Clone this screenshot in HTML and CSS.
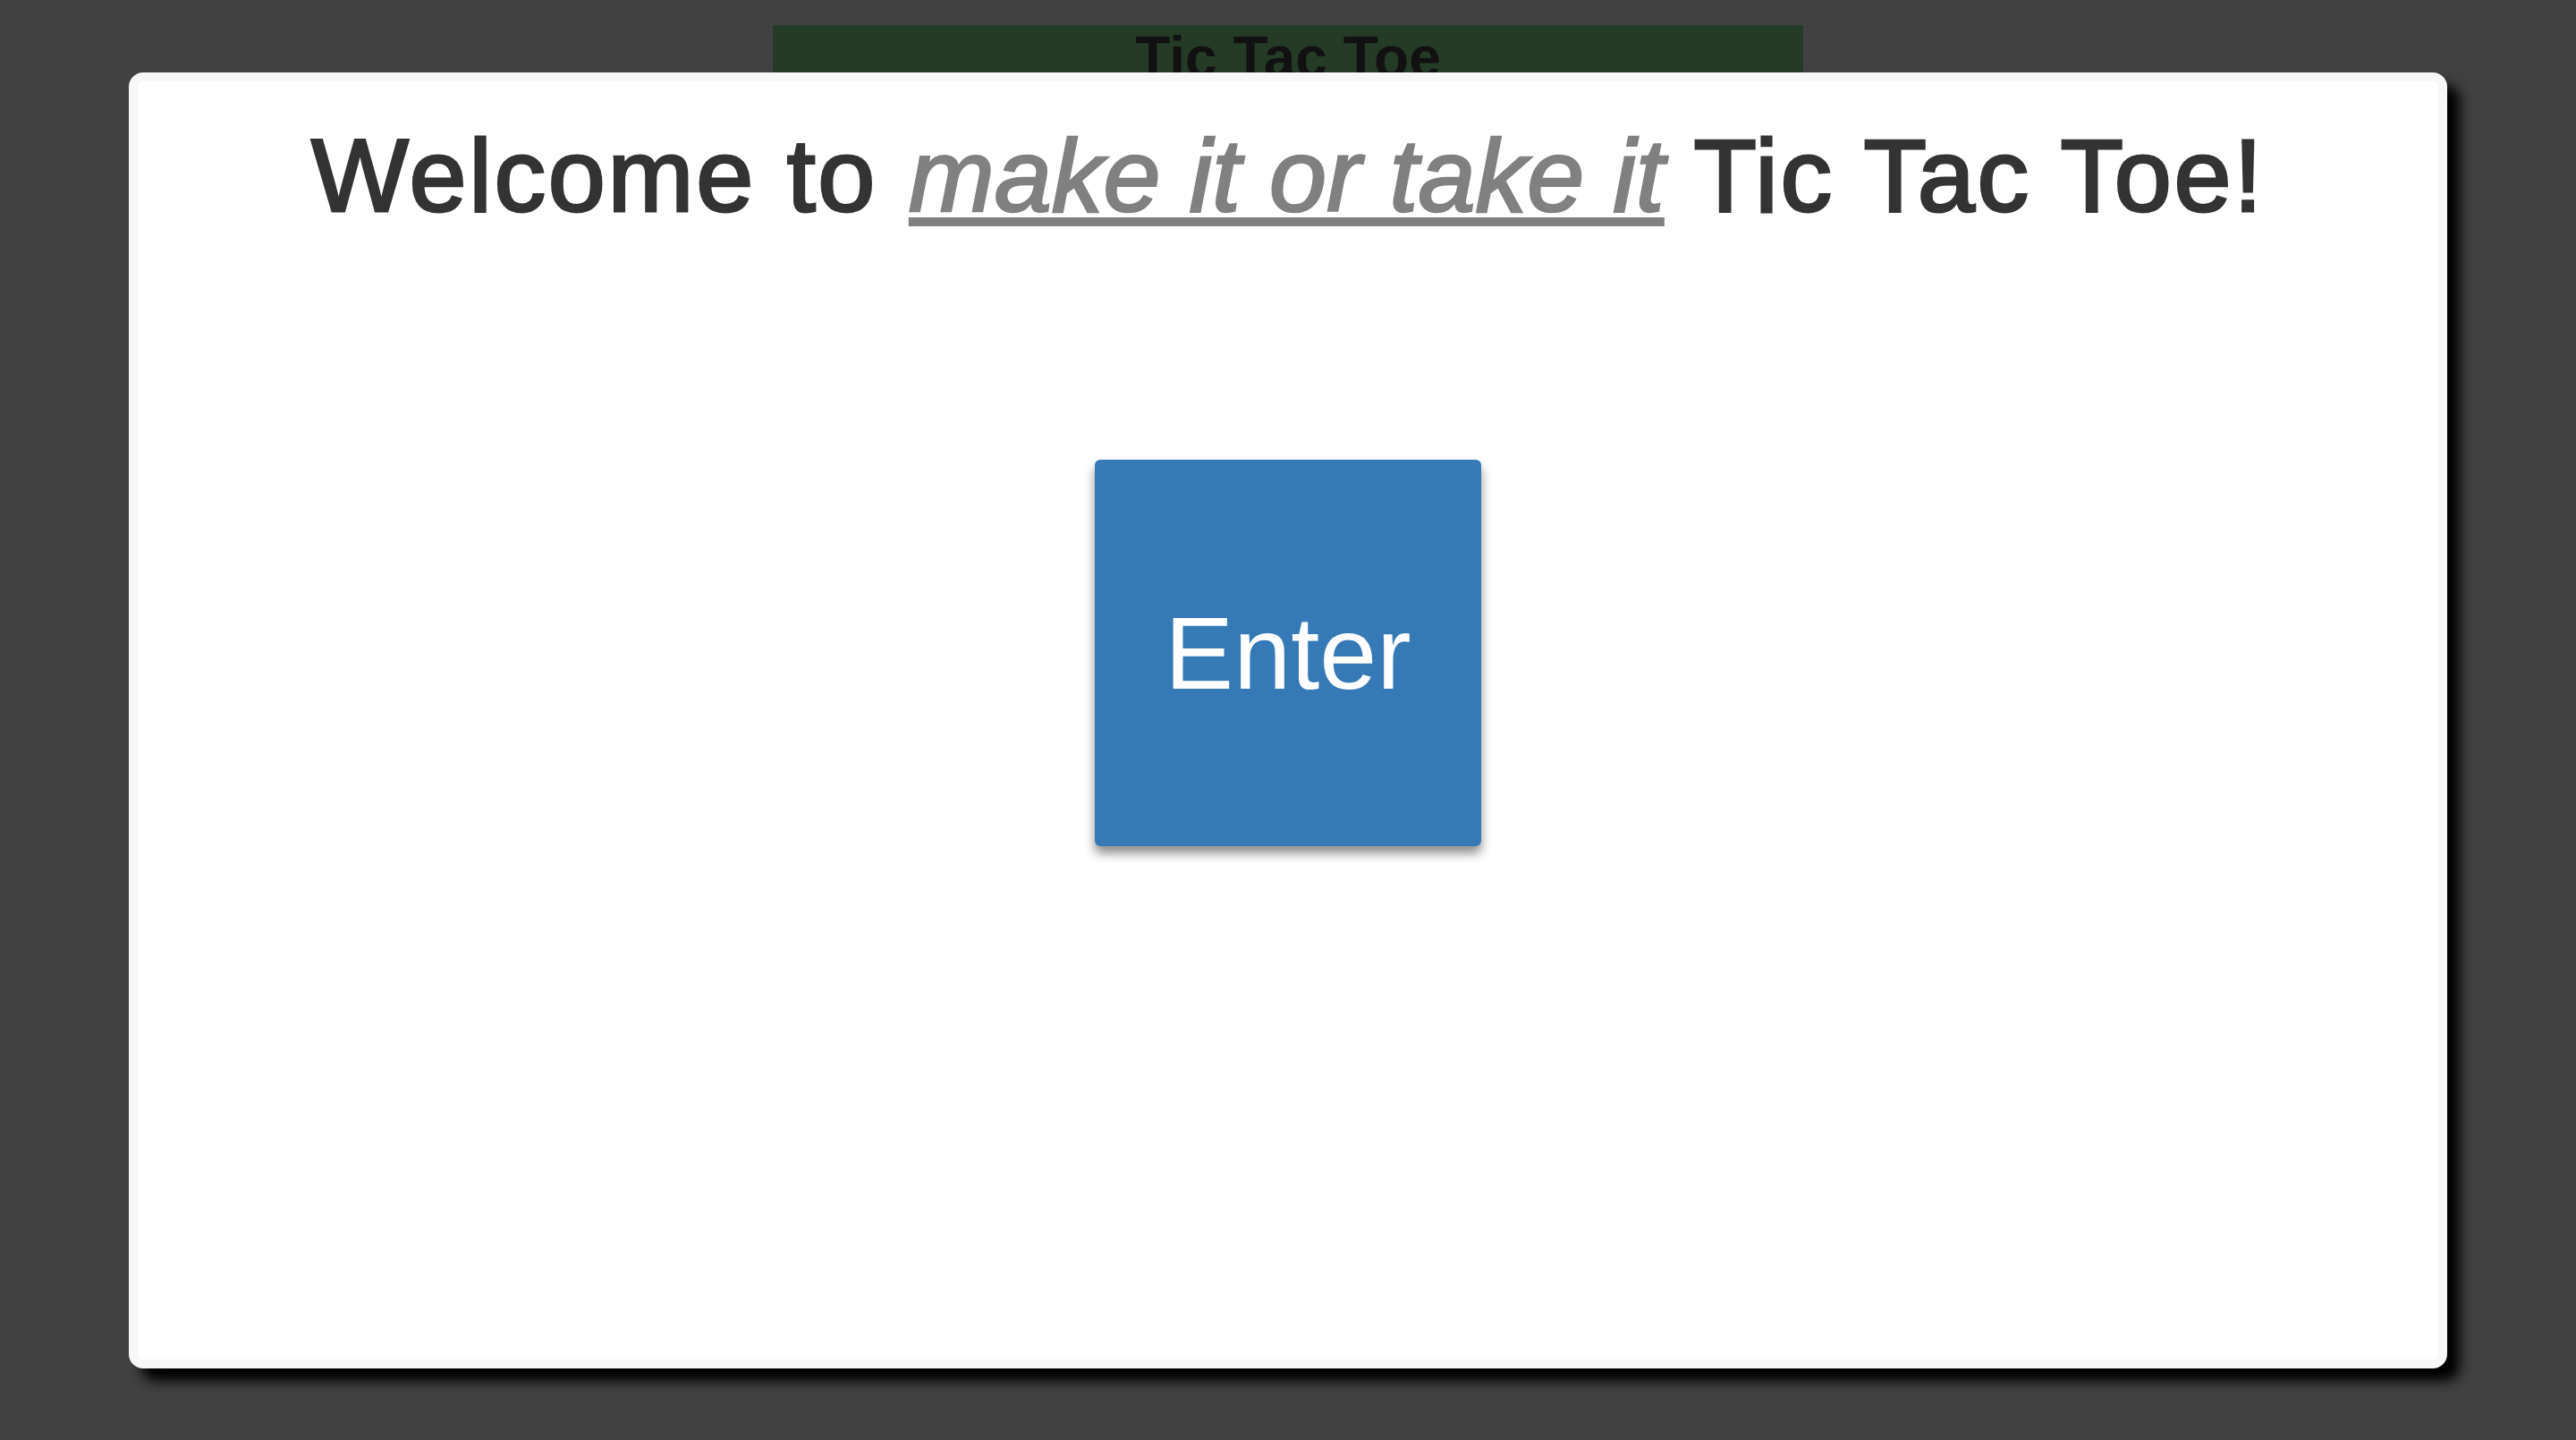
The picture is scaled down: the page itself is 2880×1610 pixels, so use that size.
FILE: index.html
```html
<!DOCTYPE html>
<html lang="en">
<head>
<meta charset="utf-8">
<title>Tic Tac Toe</title>
<link rel="stylesheet" href="styles.css">
</head>
<body>
  <header class="title-bar">Tic Tac Toe</header>
  <div class="modal">
    <h1 class="welcome">Welcome to <u class="tagline">make it or take it</u> Tic Tac Toe!</h1>
    <div class="actions">
      <button class="enter-btn" type="button">Enter</button>
    </div>
  </div>
</body>
</html>
```
FILE: styles.css
```css
html, body {
  margin: 0;
  padding: 0;
  height: 100%;
}
body {
  background: #414141;
  font-family: "Liberation Sans", Arial, Helvetica, sans-serif;
  overflow: hidden;
}
.title-bar {
  width: 40vw;
  margin: 28px auto 0;
  height: 80px;
  background: #243c25;
  color: #111;
  font-size: 64px;
  font-weight: bold;
  line-height: 1.149;
  text-align: center;
}
.modal {
  position: fixed;
  top: 5vh;
  left: 5vw;
  width: 90vw;
  height: 90vh;
  box-sizing: border-box;
  background: #fff;
  border: 10px solid #f7f7f7;
  border-radius: 16px;
  box-shadow: 14px 14px 14px #000;
  display: flex;
  flex-direction: column;
  align-items: center;
}
.welcome {
  margin: 42px 0 0;
  font-size: 4vw;
  line-height: 1.1;
  font-weight: normal;
  color: #333;
  -webkit-text-stroke: 3px #333;
  font-kerning: normal;
  letter-spacing: 2.7px;
  text-align: center;
  white-space: nowrap;
}
.tagline {
  font-style: italic;
  color: #808080;
  -webkit-text-stroke: 2.5px #808080;
  letter-spacing: 0;
  text-decoration: underline;
  text-decoration-thickness: 10px;
  text-underline-offset: 7px;
}
.actions {
  margin-top: 255px;
  display: flex;
  justify-content: center;
}
.enter-btn {
  width: 15vw;
  height: 15vw;
  border: none;
  border-radius: 6px;
  background: #357ab6;
  color: #fff;
  font-family: "Liberation Sans", Arial, Helvetica, sans-serif;
  font-size: 4vw;
  line-height: 1;
  padding: 0;
  box-shadow: 0 8px 12px rgba(0, 0, 0, 0.45);
  cursor: pointer;
}
```
